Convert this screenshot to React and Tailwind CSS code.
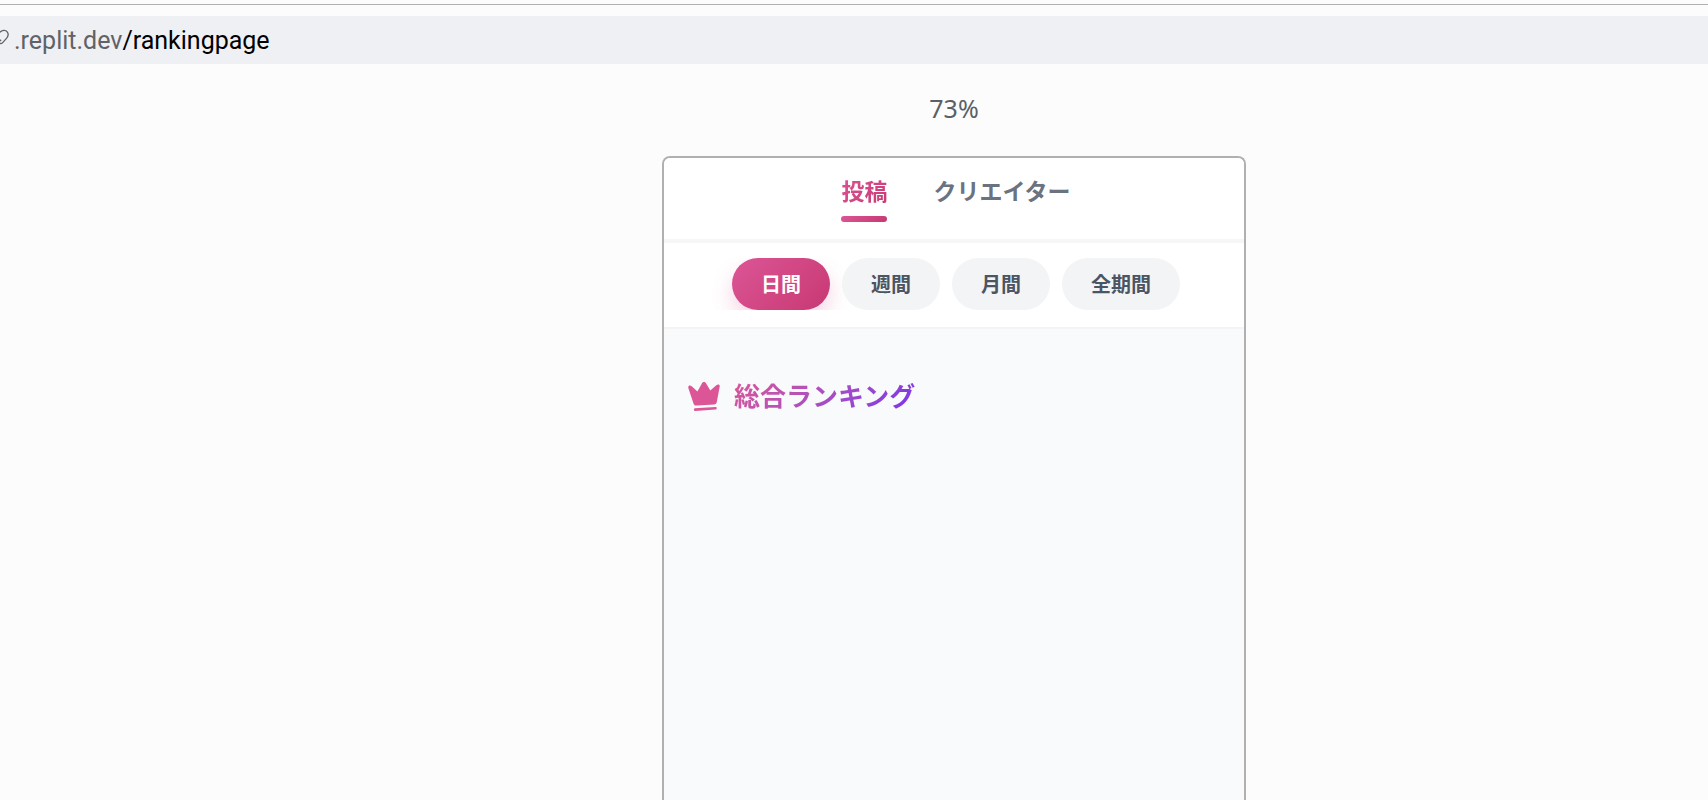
const periods = ['日間', '週間', '月間', '全期間'];

function CrownIcon() {
  return (
    <svg width="32" height="30" viewBox="0 0 32 30" fill="#dc5596" aria-hidden="true">
      <path d="M5.6 21.8 L0.4 6.2 C-0.3 3.2 2.3 3 4 4.6 L9.4 9.6 L13.6 2 C14.7 -0.5 17.2 -0.5 18.3 1.8 L22.3 8.4 L28.3 3.2 C30 1.7 32.2 2.4 31.7 4.6 L28.8 20 C28.5 21.7 27.6 22.4 26.2 22.5 L9 23.5 C7.1 23.6 6.2 23.4 5.6 21.8 Z" />
      <path d="M6.8 26.3 L27.8 25.1 C29.1 25 29.1 27.3 27.8 27.5 L7 29 C5.6 29.1 5.5 26.5 6.8 26.3 Z" />
    </svg>
  );
}

function AddressBar() {
  return (
    <header className="border-t border-[#b0b0b0] pt-[11px]">
      <div className="flex h-12 items-center gap-[5px] overflow-hidden bg-[#eff0f3] pt-[2px] text-[25px]">
        <svg className="mb-2 shrink-0" width="9" height="16" viewBox="0 0 9 16" fill="none" stroke="#5f6368" strokeWidth="1.3" aria-hidden="true">
          <path d="M0 3.3 C2 .9 5.6 .7 7.2 2.8 C8.9 5.2 8.4 7.1 6.7 9.2 L2.9 13.4 C2 14.5 1 14.8 0 14.2 M0 12 L1.1 10.8" />
        </svg>
        <a href="/rankingpage" className="text-black">
          <span className="text-[#5f6368]">.replit.dev</span>/rankingpage
        </a>
      </div>
    </header>
  );
}

export default function App() {
  return (
    <div className="flex min-h-screen flex-col bg-[#fcfcfc] pt-1 font-['Roboto','Noto_Sans_CJK_JP',sans-serif]">
      <AddressBar />
      <main className="flex grow flex-col items-center pl-[200px]">
        <p className="mt-7 font-['Noto_Sans',sans-serif] text-[25px] leading-8 text-[#5b5f66]">73%</p>
        <section className="mt-8 flex w-full max-w-[584px] grow flex-col overflow-hidden rounded-t-lg border-2 border-b-0 border-[#b0b0b0] bg-[#f9fafc] font-['Noto_Sans_CJK_JP',sans-serif] font-bold">
          <nav className="flex h-[85px] items-start justify-center gap-[46px] border-b-4 border-[#f6f6f7] bg-white pt-[14px] pl-1 text-[23px] leading-9">
            <button className="flex flex-col gap-2">
              <span className="bg-linear-135 from-[#dc5596] to-[#c73872] bg-clip-text text-transparent">投稿</span>
              <span className="h-[6px] w-full rounded-full bg-linear-135 from-[#dc5596] to-[#c73872]" />
            </button>
            <button className="text-[#6b7280]">クリエイター</button>
          </nav>
          <div className="border-b-2 border-[#f3f4f6] bg-white pt-[15px] pb-[17px] pl-1">
            <div className="flex justify-center gap-3 overflow-hidden text-xl">
              {periods.map((period, index) => (
                <button
                  key={period}
                  className={
                    index === 0
                      ? 'h-[52px] rounded-full bg-linear-135 from-[#dc5596] to-[#c73872] px-[29px] text-white shadow-[0_10px_20px_rgba(219,85,150,0.25)]'
                      : 'h-[52px] rounded-full bg-[#f3f4f6] px-[29px] text-[#4b5563]'
                  }
                >
                  {period}
                </button>
              ))}
            </div>
          </div>
          <h1 className="mt-12 ml-6 flex gap-[14px] text-[26px] leading-9">
            <span className="pt-[5px]">
              <CrownIcon />
            </span>
            <span className="bg-linear-135 from-[#dc5596] to-[#7c2fe8] bg-clip-text text-transparent">総合ランキング</span>
          </h1>
        </section>
      </main>
    </div>
  );
}
